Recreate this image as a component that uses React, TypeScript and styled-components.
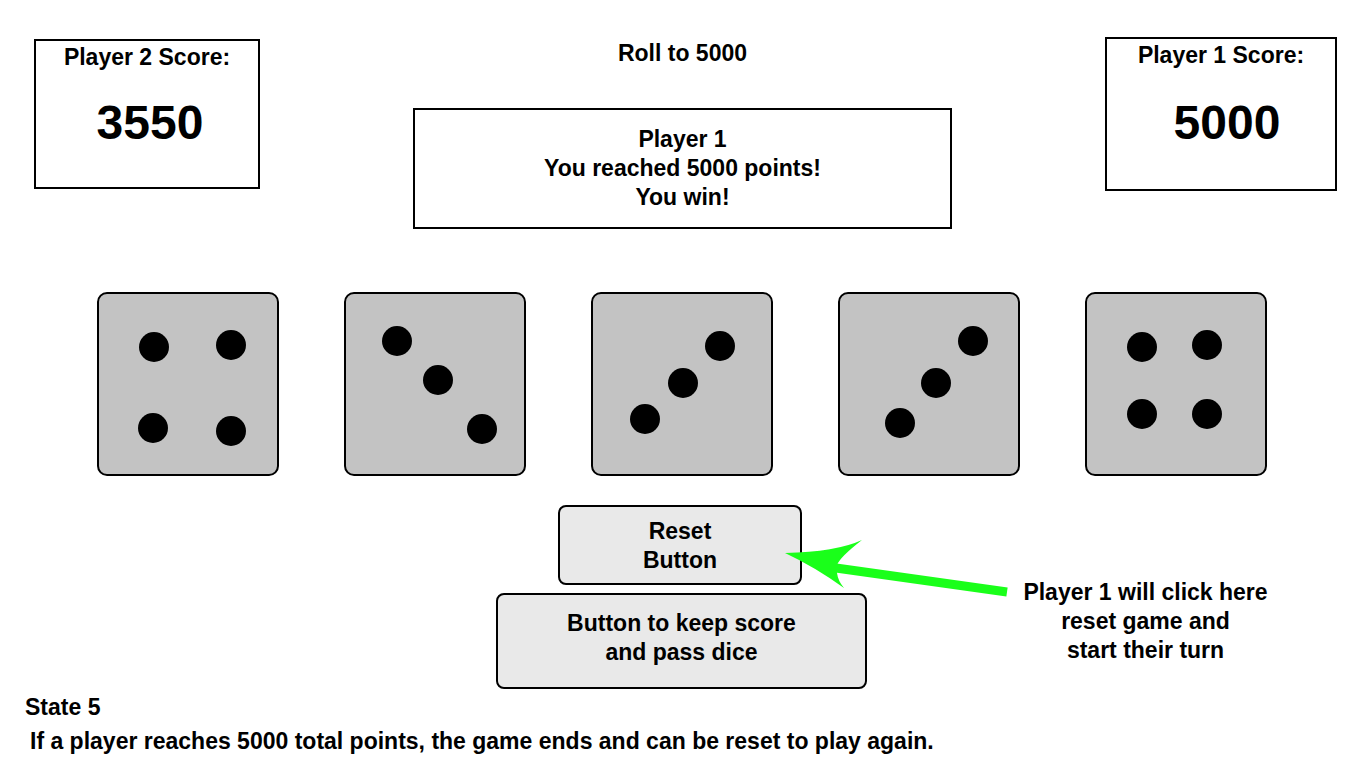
import React from 'react';
import styled, { createGlobalStyle } from 'styled-components';

const GlobalStyle = createGlobalStyle`
  html, body {
    margin: 0;
    padding: 0;
    background: #ffffff;
  }
  body {
    font-family: 'Liberation Sans', Arial, Helvetica, sans-serif;
    font-weight: bold;
    color: #000000;
  }
  * {
    box-sizing: border-box;
  }
`;

type PipPos = [number, number];

const DICE: PipPos[][] = [
    [[40, 38], [117, 36], [39, 119], [117, 122]],
    [[36, 32], [77, 71], [121, 120]],
    [[112, 37], [75, 74], [37, 110]],
    [[118, 32], [81, 74], [45, 114]],
    [[40, 38], [105, 36], [40, 105], [105, 105]],
];

const Page = styled.div`
  width: 1366px;
  height: 768px;
  display: flex;
  flex-direction: column;
  overflow: hidden;
`;

const TopRow = styled.div`
  display: flex;
  align-items: flex-start;
  padding: 0 29px 0 34px;
`;

const ScoreBox = styled.div<{ $top: number; $width: number; $height: number }>`
  margin-top: ${(p) => p.$top}px;
  width: ${(p) => p.$width}px;
  height: ${(p) => p.$height}px;
  border: 2px solid #000;
  display: flex;
  flex-direction: column;
  align-items: center;
  padding-top: 3px;
`;

const ScoreLabel = styled.div`
  font-size: 23px;
  line-height: 27px;
`;

const ScoreValue = styled.div<{ $gap: number; $shift: number }>`
  margin-top: ${(p) => p.$gap}px;
  margin-left: ${(p) => p.$shift * 2}px;
  font-size: 48px;
  line-height: 56px;
`;

const Center = styled.div`
  flex: 1;
  display: flex;
  flex-direction: column;
  align-items: center;
`;

const Title = styled.div`
  margin-top: 40px;
  font-size: 23px;
  line-height: 27px;
`;

const Message = styled.div`
  margin-top: 41px;
  width: 539px;
  height: 121px;
  border: 2px solid #000;
  display: flex;
  flex-direction: column;
  align-items: center;
  justify-content: center;
  font-size: 23px;
  line-height: 29px;
  text-align: center;
`;

const DiceRow = styled.div`
  margin-top: 63px;
  padding-right: 2px;
  display: flex;
  justify-content: center;
  gap: 65px;
`;

const Die = styled.div`
  position: relative;
  width: 182px;
  height: 184px;
  background: #c3c3c3;
  border: 2px solid #000;
  border-radius: 10px;
`;

const Pip = styled.span<{ $x: number; $y: number }>`
  position: absolute;
  left: ${(p) => p.$x}px;
  top: ${(p) => p.$y}px;
  width: 30px;
  height: 30px;
  border-radius: 50%;
  background: #000;
`;

const Controls = styled.div`
  position: relative;
  margin-top: 29px;
  padding-right: 3px;
  display: grid;
  grid-template-columns: 1fr 371px 1fr;
`;

const ButtonStack = styled.div`
  grid-column: 2;
  display: flex;
  flex-direction: column;
  align-items: center;
  gap: 8px;
`;

const ActionButton = styled.div<{ $width: number; $height: number; $pad: number; $nudge?: number }>`
  width: ${(p) => p.$width}px;
  height: ${(p) => p.$height}px;
  padding-top: ${(p) => p.$pad}px;
  margin-right: ${(p) => p.$nudge ?? 0}px;
  background: #e9e9e9;
  border: 2px solid #000;
  border-radius: 8px;
  font-size: 23px;
  line-height: 29px;
  text-align: center;
`;

const Note = styled.div`
  grid-column: 3;
  margin-top: 73px;
  padding-left: 61px;
  font-size: 23px;
  line-height: 29px;
  text-align: center;
`;

const ArrowLayer = styled.svg`
  position: absolute;
  left: 0;
  top: 0;
  width: 1366px;
  height: 190px;
  pointer-events: none;
`;

const Caption = styled.div`
  margin-top: 5px;
  font-size: 23px;
  line-height: 27px;
`;

const CaptionTitle = styled.div`
  padding-left: 25px;
`;

const CaptionText = styled.div`
  margin-top: 7px;
  padding-left: 30px;
`;

const App: React.FC = () => {
    return (
        <Page>
            <GlobalStyle />
            <TopRow>
                <ScoreBox $top={39} $width={226} $height={150}>
                    <ScoreLabel>Player 2 Score:</ScoreLabel>
                    <ScoreValue $gap={24} $shift={3}>3550</ScoreValue>
                </ScoreBox>
                <Center>
                    <Title>Roll to 5000</Title>
                    <Message>
                        <div>Player 1</div>
                        <div>You reached 5000 points!</div>
                        <div>You win!</div>
                    </Message>
                </Center>
                <ScoreBox $top={37} $width={232} $height={154}>
                    <ScoreLabel>Player 1 Score:</ScoreLabel>
                    <ScoreValue $gap={26} $shift={6}>5000</ScoreValue>
                </ScoreBox>
            </TopRow>

            <DiceRow>
                {DICE.map((pips, i) => (
                    <Die key={i}>
                        {pips.map(([x, y], j) => (
                            <Pip key={j} $x={x} $y={y} />
                        ))}
                    </Die>
                ))}
            </DiceRow>

            <Controls>
                <ButtonStack>
                    <ActionButton $width={244} $height={80} $pad={10} $nudge={3}>
                        Reset<br />Button
                    </ActionButton>
                    <ActionButton $width={371} $height={96} $pad={14}>
                        Button to keep score<br />and pass dice
                    </ActionButton>
                </ButtonStack>
                <Note>
                    Player 1 will click here<br />
                    reset game and<br />
                    start their turn
                </Note>
                <ArrowLayer viewBox="0 0 1366 190">
                    <line x1="836" y1="63" x2="1007" y2="87" stroke="#1aff1a" strokeWidth="9" />
                    <path
                        d="M785,48 Q836,47 862,35 Q840,52 837,60 L837,68 Q838,76 844,83 Q815,62 785,48 Z"
                        fill="#1aff1a"
                    />
                </ArrowLayer>
            </Controls>

            <Caption>
                <CaptionTitle>State 5</CaptionTitle>
                <CaptionText>If a player reaches 5000 total points, the game ends and can be reset to play again.</CaptionText>
            </Caption>
        </Page>
    );
};

export default App;
